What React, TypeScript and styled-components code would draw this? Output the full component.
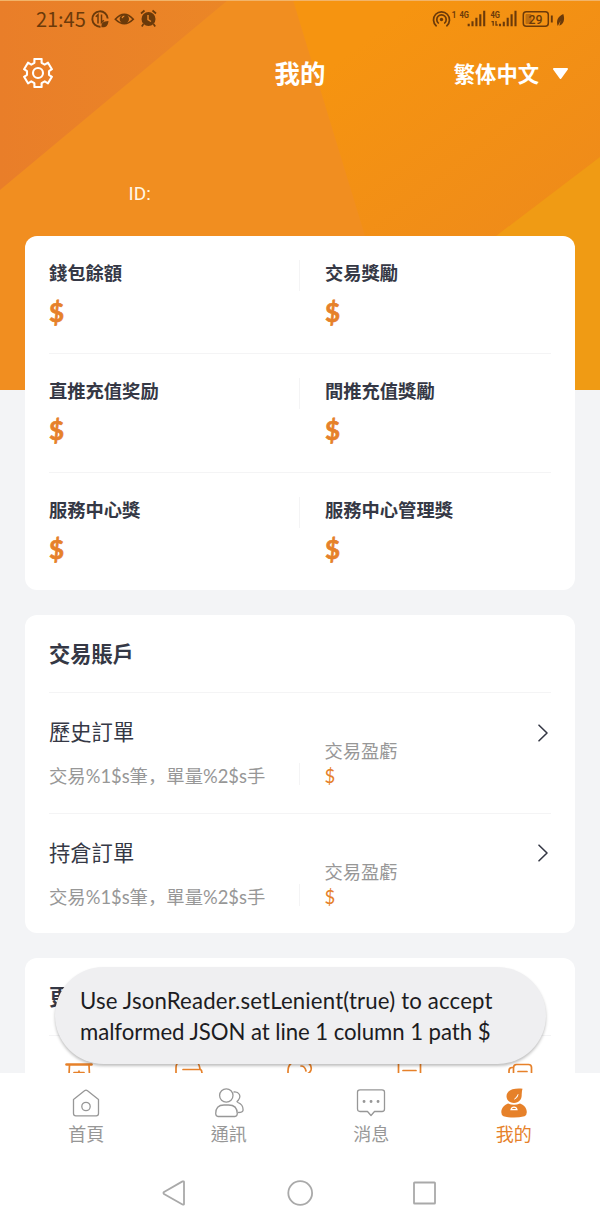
import React from 'react';
import styled, { createGlobalStyle } from 'styled-components';

const ORANGE = '#e6812a';
const INK = '#353845';
const GREY = '#979797';
const LINE = '#f4f4f5';
const BROWN = '#6b3a0a';

const GlobalStyle = createGlobalStyle`
  * { box-sizing: border-box; }
  body {
    margin: 0;
    background: #f3f4f6;
    font-family: Lato, "Noto Sans CJK TC", sans-serif;
    color: ${INK};
  }
  svg { display: block; flex: none; }
`;

const Screen = styled.div`
  position: relative;
  width: 600px;
  height: 1224px;
  overflow: hidden;
  display: flex;
  flex-direction: column;
`;

const Backdrop = styled.svg`
  position: absolute;
  left: 0;
  top: 0;
`;

const StatusBar = styled.div`
  position: relative;
  display: flex;
  align-items: center;
  justify-content: space-between;
  height: 38px;
  padding: 0 34px 0 36px;
  color: ${BROWN};
`;

const Clock = styled.span`
  font: 400 20px/36px "Noto Sans CJK SC", sans-serif;
  letter-spacing: -0.05px;
  width: 55px;
  white-space: nowrap;
`;

const StatusGroup = styled.div`
  display: flex;
  align-items: center;
`;

const AppBar = styled.header`
  position: relative;
  display: grid;
  grid-template-columns: 1fr 100px 1fr;
  align-items: center;
  height: 70px;
  padding: 0 31px 0 23px;
  color: #fff;
  font-family: "Noto Sans CJK SC", sans-serif;
`;

const PageTitle = styled.h1`
  margin: -2px -4px 0 4px;
  text-align: center;
  font-size: 25.5px;
  line-height: 40px;
  font-weight: 700;
`;

const Language = styled.div`
  display: flex;
  align-items: center;
  justify-content: flex-end;
  gap: 13px;
  margin-top: -2px;
  font-size: 21.3px;
  font-weight: 700;
`;

const UserId = styled.div`
  position: relative;
  height: 128px;
  padding: 73px 0 0 128.5px;
  font: 400 19px/26px Roboto, sans-serif;
  color: #fff7e6;
`;

const Main = styled.main`
  position: relative;
  flex: 1;
  min-height: 0;
  overflow: hidden;
  padding: 0 25px;
  display: flex;
  flex-direction: column;
  gap: 25px;
`;

const Card = styled.section<{ $h: number }>`
  flex: none;
  height: ${p => p.$h}px;
  padding: 0 24px;
  border-radius: 12px;
  background: #fff;
`;

const BalanceRow = styled.div`
  display: grid;
  grid-template-columns: 1fr 1fr;
  height: 118.5px;
  &:first-child { height: 117px; }
  & + & { border-top: 1px solid ${LINE}; }
`;

const BalanceCell = styled.div`
  position: relative;
  padding: 23px 0 0 0;
  & + & { padding-left: 25px; }
  & + &::before {
    content: '';
    position: absolute;
    left: -1px;
    top: 24px;
    width: 1px;
    height: 31px;
    background: ${LINE};
  }
`;

const BalanceLabel = styled.div<{ $sc?: boolean }>`
  font-family: ${p => (p.$sc ? '"Noto Sans CJK SC"' : '"Noto Sans CJK TC"')}, sans-serif;
  font-size: 18.3px;
  line-height: 26px;
  font-weight: 700;
`;

const BalanceValue = styled.div`
  margin-top: 10px;
  font: 700 26px/34px Lato, sans-serif;
  -webkit-text-stroke: 0.7px ${ORANGE};
  color: ${ORANGE};
`;

const CardTitle = styled.h2`
  margin: 0;
  height: 78px;
  font-size: 21.2px;
  line-height: 78px;
  font-weight: 700;
  border-bottom: 1px solid ${LINE};
`;

const OrderRow = styled.div`
  display: grid;
  grid-template-columns: 250px 1fr 17px;
  height: 120.4px;
  & + & { border-top: 1px solid ${LINE}; margin-top: -0.4px; }
  & > svg { margin-top: 31px; }
  & + & > svg { margin-top: 30px; }
`;

const OrderInfo = styled.div`
  padding-top: 24px;
`;

const OrderName = styled.div`
  font-size: 21.3px;
  line-height: 30px;
`;

const OrderMeta = styled.div`
  margin-top: 16px;
  font-family: Lato, "Noto Sans CJK SC", sans-serif;
  font-size: 18.35px;
  line-height: 26px;
  color: ${GREY};
  white-space: nowrap;
`;

const Profit = styled.div`
  position: relative;
  padding: 45px 0 0 25.500px;
  font-size: 18.3px;
  line-height: 26px;
  color: ${GREY};
  &::before {
    content: '';
    position: absolute;
    left: 0;
    top: 70px;
    width: 1px;
    height: 22px;
    background: ${LINE};
  }
`;

const ProfitValue = styled.div`
  font-size: 18.5px;
  line-height: 25px;
  color: ${ORANGE};
`;

const Shortcuts = styled.div`
  display: flex;
  justify-content: space-between;
  padding: 24px 15px 0 14px;
`;

const Toast = styled.div`
  position: absolute;
  left: 55px;
  top: 967px;
  width: 491px;
  height: 97px;
  padding: 19px 25px;
  border-radius: 49px;
  background: #efeff1;
  box-shadow: 0 2px 3px rgba(0, 0, 0, 0.25);
  font: 400 22.2px/30.5px Lato, sans-serif;
  color: #1c1c22;
  white-space: nowrap;
`;

const ToastLine = styled.div<{ $ls: number }>`
  letter-spacing: ${p => p.$ls}px;
`;

const TabBar = styled.nav`
  position: relative;
  display: grid;
  grid-template-columns: repeat(4, 1fr);
  height: 88px;
  padding: 0 15px;
  background: #fff;
`;

const Tab = styled.div<{ $active?: boolean }>`
  display: flex;
  flex-direction: column;
  align-items: center;
  padding-top: 14px;
  color: ${p => (p.$active ? ORANGE : GREY)};
  font-size: 18px;
  line-height: 26px;
  & > svg { margin-bottom: 3px; }
`;

const SystemNav = styled.div`
  position: relative;
  display: flex;
  justify-content: center;
  gap: 98px;
  height: 63px;
  padding-top: 18px;
  background: #fff;
`;

const Sketch = ({ w, h, sw = 1.3, color = 'currentColor', children }: {
  w: number; h: number; sw?: number; color?: string; children: React.ReactNode;
}) => (
  <svg width={w} height={h} viewBox={`0 0 ${w} ${h}`} fill="none" stroke={color}
    strokeWidth={sw} strokeLinecap="round" strokeLinejoin="round">{children}</svg>
);

const Chevron = () => (
  <Sketch w={16} h={18} sw={1.6} color={INK}><path d="M5 1.2l8 7.8-8 7.8" /></Sketch>
);

const Signal = ({ x, short }: { x: number; short?: boolean }) => (
  <path
    transform={`translate(${x} .3)`}
    d={`M2 17v-2.500M5.800 17v-${short ? 4.5 : 5}M9.700 17V8.500M13.600 17V5M17.500 17V1.500`}
    stroke={BROWN}
    strokeWidth="2.100"
  />
);

const StatusLeft = () => (
  <svg width="66" height="20" viewBox="0 0 66 20" fill="none" stroke={BROWN} strokeWidth="1.9">
    <path d="M9.500 17.700A7.700 7.700 0 1 1 16.700 9.500" />
    <path d="M4.800 7.800l2.200-2v8.700M10.500 5.500v8l2.300-2.300" strokeWidth="1.500" />
    <path d="M10.500 18.300c-.5-4.500 1.500-6 7-6.300-.5 4.500-2 6.600-7 6.300z" fill={BROWN} stroke="none" />
    <path d="M24.300 10.200q9-10 18 0q-9 9-18 0z" strokeWidth="1.600" />
    <circle cx="33.300" cy="10" r="4.700" fill={BROWN} stroke="none" />
    <path d="M31.100 9.200q.5-2 2.200-2.100" stroke="#ea8526" strokeWidth="1.300" />
    <circle cx="57.500" cy="10" r="7" fill={BROWN} stroke="none" />
    <path d="M50 4.500l3.500-3M65 4.500L61.500 1.500M52.500 15l-1.700 2.500M62.500 15l1.700 2.500" strokeWidth="1.700" />
    <path d="M57 6v4.500l3 2" stroke="#ea8526" strokeWidth="1.500" />
  </svg>
);

const StatusRight = () => (
  <svg width="135" height="20" viewBox="0 0 135 20" fill="none">
    <g stroke={BROWN} strokeWidth="1.700" strokeLinecap="round">
      <path d="M5.200 16.800A8 8 0 1 1 15.800 16.800M7.300 14A4.700 4.700 0 1 1 13.700 14" />
    </g>
    <circle cx="10.500" cy="10.500" r="1.700" fill={BROWN} />
    <g fill={BROWN} fontFamily="Roboto, sans-serif" fontWeight="700" fontSize="9.500">
      <text x="20.500" y="8.500" fontWeight="500" fontSize="9">1</text>
      <text x="28.500" y="8.500" textLength="9.500" lengthAdjust="spacingAndGlyphs">4G</text>
      <text x="59.500" y="8.500" textLength="9.500" lengthAdjust="spacingAndGlyphs">4G</text>
      <text x="97.500" y="14.600" fontSize="13" fontWeight="500" textLength="14" lengthAdjust="spacingAndGlyphs">29</text>
    </g>
    <Signal x={35.7} />
    <Signal x={67} short />
    <path d="M60.500 12.700h1.700v4M65 12v4h1.700" stroke={BROWN} strokeWidth="1.300" />
    <rect x="92.300" y="2.800" width="25" height="14.500" rx="3" stroke={BROWN} strokeWidth="1.500" />
    <rect x="94.500" y="5" width="6" height="10" rx="1" fill={BROWN} opacity=".4" />
    <path d="M120.800 6.500v7" stroke={BROWN} strokeWidth="1.900" />
    <path d="M126.800 17c-2-5 0-9.500 5.500-12 2 6 0 10.500-4 11.700l1.300-5z" fill={BROWN} />
  </svg>
);

const Gear = () => (
  <Sketch w={30} h={30} sw={2.1}>
    <path d="M11.400 1h7.200v3.800l3.100 1.800L25 4.700l3.900 6.500L26 13.200v3.600l2.900 2L25 25.300l-3.300-1.900-3.100 1.800V29h-7.200v-3.800l-3.100-1.800L5 25.300 1.100 18.800 4 16.800v-3.600l-2.900-2L5 4.700l3.300 1.900 3.100-1.800z" />
    <circle cx="15" cy="15" r="5" />
  </Sketch>
);

const balances: { label: string; sc?: boolean }[][] = [
  [{ label: '錢包餘額' }, { label: '交易獎勵' }],
  [{ label: '直推充值奖励', sc: true }, { label: '間推充值獎勵' }],
  [{ label: '服務中心獎' }, { label: '服務中心管理獎' }],
];

export default function App() {
  return (
    <Screen>
      <GlobalStyle />
      <Backdrop width="600" height="390" viewBox="0 0 600 390">
        <defs>
          <linearGradient id="left" x1="0" y1="0" x2="1" y2="0">
            <stop offset="0" stopColor="#e97e29" /><stop offset="1" stopColor="#eb8626" />
          </linearGradient>
          <linearGradient id="right" x1="0" y1="0" x2="1" y2="1">
            <stop offset=".2" stopColor="#f69410" /><stop offset="1" stopColor="#ee8a1b" />
          </linearGradient>
        </defs>
        <rect width="600" height="390" fill="#f18e20" />
        <path d="M0 0H228L0 190z" fill="url(#left)" />
        <path d="M293 0H600V236H365z" fill="url(#right)" />
        <path d="M600 157L496 236V390H600z" fill="#f09b14" />
        <rect width="600" height="1" fill="#f2b469" />
      </Backdrop>

      <StatusBar>
        <StatusGroup><Clock>21:45</Clock><StatusLeft /></StatusGroup>
        <StatusRight />
      </StatusBar>

      <AppBar>
        <Gear />
        <PageTitle>我的</PageTitle>
        <Language>
          繁体中文
          <svg width="17" height="13" viewBox="0 0 17 13" fill="#fff" stroke="#fff" strokeWidth="2" strokeLinejoin="round">
            <path d="M2 3h13L8.500 12z" />
          </svg>
        </Language>
      </AppBar>
      <UserId>ID:</UserId>

      <Main>
        <Card $h={354}>
          {balances.map((row, i) => (
            <BalanceRow key={i}>
              {row.map(cell => (
                <BalanceCell key={cell.label}>
                  <BalanceLabel $sc={cell.sc}>{cell.label}</BalanceLabel>
                  <BalanceValue>$</BalanceValue>
                </BalanceCell>
              ))}
            </BalanceRow>
          ))}
        </Card>

        <Card $h={318}>
          <CardTitle>交易賬戶</CardTitle>
          {['歷史訂單', '持倉訂單'].map(name => (
            <OrderRow key={name}>
              <OrderInfo>
                <OrderName>{name}</OrderName>
                <OrderMeta>交易%1$s筆，單量%2$s手</OrderMeta>
              </OrderInfo>
              <Profit>
                交易盈虧
                <ProfitValue>$</ProfitValue>
              </Profit>
              <Chevron />
            </OrderRow>
          ))}
        </Card>

        <Card $h={220}>
          <CardTitle>更</CardTitle>
          <Shortcuts>
            <Sketch w={32} h={30} sw={1.7} color={ORANGE}>
              <path d="M3.500 4.500h25" strokeWidth="2.600" />
              <path d="M6.500 5l-1 20M26 5l1 20M11 12.500h10M16 11v1" />
            </Sketch>
            <Sketch w={32} h={30} sw={1.7} color={ORANGE}>
              <path d="M3 26V8q0-5 3-5h18q2 0 3 6q2 1 2 4M10 9.500h17" />
            </Sketch>
            <Sketch w={32} h={30} sw={1.7} color={ORANGE}>
              <path d="M7 3.500Q4 6 4 11v14M25 3.500Q28 6 27 10q-1 3-4 4M17 6q4 0 5 5" />
            </Sketch>
            <Sketch w={32} h={30} sw={1.7} color={ORANGE}>
              <rect x="4.500" y="1" width="22" height="26" rx="3" /><path d="M9 10.500h13" />
            </Sketch>
            <Sketch w={32} h={30} sw={1.7} color={ORANGE}>
              <path d="M9.500 26V8q0-3.500 3-3.500h12q3 0 3 3v19M9 7.500H8Q5 7.500 5 11v16M14 11.500h9" />
            </Sketch>
          </Shortcuts>
        </Card>
      </Main>

      <TabBar>
        <Tab>
          <Sketch w={30} h={31}>
            <path d="M2.500 12.500L13.500 3.700Q15 2.700 16.500 3.700L27.500 12.500V26.500Q27.500 28.800 25.200 28.800H4.800Q2.500 28.800 2.500 26.500z" />
            <circle cx="15" cy="19.500" r="4.200" />
          </Sketch>
          首頁
        </Tab>
        <Tab>
          <Sketch w={30} h={31}>
            <circle cx="12.300" cy="8.500" r="6.700" />
            <path d="M1.700 26.800Q1.500 18 10 18H14.500Q23.300 18 23.300 26.800Q23 29.500 21 29.500H4Q2 29.500 1.700 26.800z" />
            <path d="M20 5C25 4.500 27.500 9 24.500 12.800C23.500 14.500 22 14.500 24 15.500C27.500 17 29.300 20.500 29 23.500Q28.500 25.500 24.500 25.500" />
          </Sketch>
          通訊
        </Tab>
        <Tab>
          <Sketch w={30} h={31}>
            <path d="M4 2.800H26Q28.500 2.800 28.500 5V22Q28.500 24.500 26 24.500H18.500L15 28.500L11.500 24.500H4Q1.500 24.500 1.500 22V5Q1.500 2.800 4 2.800z" />
            <path d="M8 14.500h.1M15 14.500h.1M22 14.500h.1" strokeWidth="2.800" />
          </Sketch>
          消息
        </Tab>
        <Tab $active>
          <svg width="30" height="31" viewBox="0 0 30 31" fill={ORANGE}>
            <path d="M23.500 1.700C15 .8 7.500 3 7.500 9.200C7.500 13.200 10.700 15.900 15 15.900C20 15.900 22.700 12.300 22.700 8.300Q22.600 4.300 23.500 1.700z" />
            <path d="M9 16.500Q15 18.900 21 16.500C25.500 18 27.800 21.500 27.800 25.200Q27.800 28 25.500 29.200Q15 32 4.500 29.200Q2.300 28 2.300 25.200C2.300 21.500 4.800 18 9 16.500z" />
            <path d="M19 7.500Q18.700 11 15.500 12Q18 10.500 19 7.500z" stroke="#fff" strokeWidth=".8" />
            <path d="M12 22.700q.6-2.500 3-2.500t3 2.500z" fill="none" stroke="#fff" strokeWidth="1.200" />
          </svg>
          我的
        </Tab>
      </TabBar>

      <SystemNav>
        <Sketch w={27} h={28} sw={1.800} color="#a9a9a9"><path d="M22 3V25Q22 26 20.500 25.500L2 15Q1 14 2 13L20.500 2.400Q22 2 22 3z" /></Sketch>
        <Sketch w={27} h={28} sw={1.800} color="#a9a9a9"><circle cx="13.200" cy="14" r="11.900" /></Sketch>
        <Sketch w={27} h={28} sw={1.800} color="#a9a9a9"><rect x="2" y="3.500" width="21" height="21" rx=".6" /></Sketch>
      </SystemNav>

      <Toast>
        <ToastLine $ls={0.17}>Use JsonReader.setLenient(true) to accept</ToastLine>
        <ToastLine $ls={-0.06}>malformed JSON at line 1 column 1 path $</ToastLine>
      </Toast>
    </Screen>
  );
}
